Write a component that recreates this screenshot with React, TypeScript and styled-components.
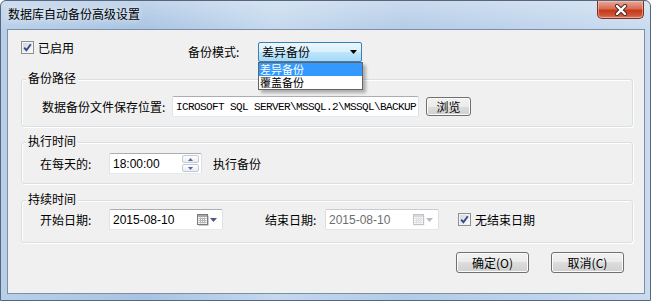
import styled, { createGlobalStyle } from "styled-components";

const GlobalStyle = createGlobalStyle`
  html, body {
    margin: 0;
    padding: 0;
    background: #ffffff;
  }
  body {
    font-family: "Noto Sans CJK SC", "Liberation Sans", sans-serif;
    font-size: 12px;
    color: #000;
  }
  * {
    box-sizing: border-box;
  }
`;

const Window = styled.div`
  width: 651px;
  height: 301px;
  border: 1px solid #56667c;
  border-radius: 6px 6px 0 0;
  display: flex;
  flex-direction: column;
  background:
    linear-gradient(180deg, rgba(255, 255, 255, 0.3), rgba(255, 255, 255, 0) 30px),
    linear-gradient(90deg, #b8cfe9 0%, #a8c3e2 22%, #c4d8ee 42%, #b3cbe7 62%, #bed3ec 82%, #c9dbef 100%);
`;

const TitleBar = styled.div`
  height: 28px;
  display: flex;
  justify-content: space-between;
  align-items: flex-start;
`;

const Title = styled.div`
  padding: 6px 0 0 7px;
  line-height: 14px;
  font-size: 12px;
  text-shadow: 0 0 6px rgba(255, 255, 255, 0.9);
`;

const CloseButton = styled.div`
  width: 47px;
  height: 18px;
  margin-right: 6px;
  border: 1px solid #7a3426;
  border-top: none;
  border-radius: 0 0 5px 5px;
  background: linear-gradient(180deg, #e9a999 0%, #d96c52 45%, #c5391a 55%, #cf5536 85%, #e08068 100%);
  box-shadow: inset 0 0 0 1px rgba(255, 220, 210, 0.45);
  display: flex;
  align-items: center;
  justify-content: center;
`;

const Client = styled.div`
  margin: 0 5px 0 6px;
  height: 265px;
  border: 1px solid #7d8fa6;
  background: #f0f0f0;
  padding: 0 11px 0 13px;
  display: flex;
  flex-direction: column;
`;

const TopRow = styled.div`
  margin-top: 11px;
  height: 21px;
  display: flex;
  align-items: flex-start;
`;

const CheckLabel = styled.div<{ $width?: number }>`
  display: flex;
  align-items: center;
  gap: 4px;
  height: 13px;
  line-height: 13px;
  width: ${(p) => (p.$width ? `${p.$width}px` : "auto")};
  flex: none;
`;

const CheckBox = styled.span`
  width: 13px;
  height: 13px;
  flex: none;
  border: 1px solid #8e8f8f;
  background: linear-gradient(135deg, #cdd2d8 0%, #eceef0 60%, #ffffff 100%);
  box-shadow: inset 0 0 0 1px #f4f4f4;
  display: flex;
  align-items: center;
  justify-content: center;
`;

const ModeGroup = styled.div`
  display: flex;
  align-items: center;
  margin-top: 1px;
`;

const FieldLabel = styled.span<{ $width: number }>`
  width: ${(p) => p.$width}px;
  flex: none;
  line-height: 14px;
  white-space: nowrap;
`;

const ComboWrap = styled.div`
  position: relative;
`;

const Combo = styled.div`
  width: 104px;
  height: 20px;
  border: 1px solid #3c7fb1;
  border-radius: 2px;
  background: linear-gradient(180deg, #eaf6fd 0%, #d9f0fc 50%, #bee6fd 50%, #a7d9f5 100%);
  display: flex;
  align-items: center;
  justify-content: space-between;
  padding: 0 4px 0 3px;
  line-height: 14px;
`;

const DropList = styled.div`
  position: absolute;
  top: 20px;
  left: 0;
  width: 105px;
  border: 1px solid #646464;
  background: #fff;
  box-shadow: 3px 3px 3px rgba(0, 0, 0, 0.28);
  z-index: 2;
`;

const DropItem = styled.div<{ $active?: boolean }>`
  height: 13px;
  line-height: 13px;
  font-size: 11px;
  padding-left: 1px;
  background: ${(p) => (p.$active ? "#3399ff" : "transparent")};
  color: ${(p) => (p.$active ? "#ffffff" : "#000000")};
`;

const Group = styled.div<{ $top: number; $padTop: number; $padBottom: number; $padLeft: number }>`
  position: relative;
  margin-top: ${(p) => p.$top}px;
  padding: ${(p) => `${p.$padTop}px 0 ${p.$padBottom}px ${p.$padLeft}px`};
  border: 1px solid #d5dfe5;
  border-radius: 3px;
  box-shadow: inset 1px 1px 0 #ffffff, 1px 1px 0 #ffffff;
`;

const Caption = styled.span`
  position: absolute;
  top: -9px;
  left: 4px;
  padding: 0 2px;
  line-height: 14px;
  background: #f0f0f0;
`;

const Row = styled.div`
  display: flex;
  align-items: center;
  height: 21px;
`;

const TextBox = styled.div<{ $width: number; $disabled?: boolean }>`
  width: ${(p) => p.$width}px;
  height: 21px;
  flex: none;
  border: 1px solid;
  border-color: ${(p) =>
    p.$disabled ? "#c9cbcf #dcdee2 #e4e6ea #dcdee2" : "#abadb3 #dbdfe6 #e3e9ef #e2e3ea"};
  border-radius: 2px;
  background: #fff;
  display: flex;
  align-items: center;
  padding-left: 3px;
  overflow: hidden;
  color: ${(p) => (p.$disabled ? "#6d6d6d" : "#000")};
`;

const PathText = styled.span`
  font-family: "Liberation Mono", "DejaVu Sans Mono", monospace;
  font-size: 11px;
  letter-spacing: -0.6px;
  white-space: nowrap;
  flex: 1;
`;

const NumText = styled.span`
  font-family: "Liberation Sans", Arial, sans-serif;
  font-size: 12px;
  flex: 1;
  white-space: nowrap;
`;

const Spinner = styled.div`
  width: 17px;
  height: 17px;
  margin-right: 2px;
  display: flex;
  flex-direction: column;
  gap: 1px;
`;

const SpinPart = styled.div`
  flex: 1;
  border: 1px solid #c3cad3;
  border-radius: 2px;
  background: linear-gradient(180deg, #ffffff 0%, #e9ecf0 100%);
  display: flex;
  align-items: center;
  justify-content: center;
`;

const PickerIcons = styled.div`
  display: flex;
  align-items: center;
  gap: 1px;
  margin-right: 5px;
`;

const Button = styled.div<{ $width: number; $height: number }>`
  width: ${(p) => p.$width}px;
  height: ${(p) => p.$height}px;
  flex: none;
  border: 1px solid #707070;
  border-radius: 3px;
  background: linear-gradient(180deg, #f2f2f2 0%, #ebebeb 50%, #dddddd 50%, #cfcfcf 100%);
  box-shadow: inset 0 0 0 1px #fbfbfb;
  display: flex;
  align-items: center;
  justify-content: center;
  line-height: 14px;
`;

const Plain = styled.span<{ $left?: number }>`
  margin-left: ${(p) => p.$left ?? 0}px;
  line-height: 14px;
  white-space: nowrap;
`;

const ButtonRow = styled.div`
  margin-top: 9px;
  padding-right: 9px;
  display: flex;
  justify-content: flex-end;
  gap: 22px;
`;

function CheckMark() {
  return (
    <svg width="9" height="9" viewBox="0 0 9 9">
      <path d="M1.2 4.6 L3.4 7.2 L7.8 1.2" fill="none" stroke="#34488a" strokeWidth="1.9" />
    </svg>
  );
}

function DownArrow({ color }: { color: string }) {
  return (
    <svg width="7" height="4" viewBox="0 0 7 4">
      <polygon points="0,0 7,0 3.5,4" fill={color} />
    </svg>
  );
}

function SmallTri({ up }: { up?: boolean }) {
  return (
    <svg width="5" height="3" viewBox="0 0 5 3">
      <polygon points={up ? "0,3 5,3 2.5,0" : "0,0 5,0 2.5,3"} fill="#4f67a6" />
    </svg>
  );
}

function CalendarIcon({ disabled }: { disabled?: boolean }) {
  const edge = disabled ? "#c4c4c4" : "#7b7b7b";
  const grid = disabled ? "#e0e0e0" : "#b5b5b5";
  return (
    <svg width="12" height="12" viewBox="0 0 12 12">
      <rect x="1.5" y="1.5" width="10" height="10" fill={disabled ? "#e8e8e8" : "#9a9a9a"} />
      <rect x="0.5" y="0.5" width="10" height="10" fill="#f7f7f7" stroke={edge} />
      <rect x="1" y="1" width="9" height="2" fill={disabled ? "#d8d8d8" : "#a9a9a9"} />
      {[4, 6, 8].map((y) => (
        <line key={`h${y}`} x1="1.5" y1={y + 0.5} x2="9.5" y2={y + 0.5} stroke={grid} />
      ))}
      {[3, 5, 7].map((x) => (
        <line key={`v${x}`} x1={x + 0.5} y1="3.5" x2={x + 0.5} y2="9.5" stroke={grid} />
      ))}
    </svg>
  );
}

function DateBox({ value, disabled }: { value: string; disabled?: boolean }) {
  return (
    <TextBox $width={114} $disabled={disabled}>
      <NumText>{value}</NumText>
      <PickerIcons>
        <CalendarIcon disabled={disabled} />
        <DownArrow color={disabled ? "#b7bcc6" : "#4a5a80"} />
      </PickerIcons>
    </TextBox>
  );
}

export default function App() {
  return (
    <>
      <GlobalStyle />
      <Window>
        <TitleBar>
          <Title>数据库自动备份高级设置</Title>
          <CloseButton>
            <svg width="14" height="12" viewBox="0 0 14 12">
              <path d="M3 2 L11 10 M11 2 L3 10" stroke="#4a2a24" strokeWidth="4.2" strokeLinecap="round" />
              <path d="M3 2 L11 10 M11 2 L3 10" stroke="#ffffff" strokeWidth="2.4" strokeLinecap="round" />
            </svg>
          </CloseButton>
        </TitleBar>

        <Client>
          <TopRow>
            <CheckLabel $width={167}>
              <CheckBox>
                <CheckMark />
              </CheckBox>
              <span>已启用</span>
            </CheckLabel>
            <ModeGroup>
              <FieldLabel $width={70}>备份模式:</FieldLabel>
              <ComboWrap>
                <Combo>
                  <span>差异备份</span>
                  <DownArrow color="#000000" />
                </Combo>
                <DropList>
                  <DropItem $active>差异备份</DropItem>
                  <DropItem>覆盖备份</DropItem>
                </DropList>
              </ComboWrap>
            </ModeGroup>
          </TopRow>

          <Group $top={17} $padTop={16} $padBottom={9} $padLeft={20}>
            <Caption>备份路径</Caption>
            <Row>
              <FieldLabel $width={130}>数据备份文件保存位置:</FieldLabel>
              <TextBox $width={247}>
                <PathText>ICROSOFT SQL SERVER\MSSQL.2\MSSQL\BACKUP</PathText>
              </TextBox>
              <Button $width={45} $height={19} style={{ marginLeft: 7 }}>
                浏览
              </Button>
            </Row>
          </Group>

          <Group $top={15} $padTop={10} $padBottom={9} $padLeft={18}>
            <Caption>执行时间</Caption>
            <Row>
              <FieldLabel $width={69}>在每天的:</FieldLabel>
              <TextBox $width={93}>
                <NumText>18:00:00</NumText>
                <Spinner>
                  <SpinPart>
                    <SmallTri up />
                  </SpinPart>
                  <SpinPart>
                    <SmallTri />
                  </SpinPart>
                </Spinner>
              </TextBox>
              <Plain $left={11}>执行备份</Plain>
            </Row>
          </Group>

          <Group $top={16} $padTop={8} $padBottom={12} $padLeft={18}>
            <Caption>持续时间</Caption>
            <Row>
              <FieldLabel $width={69}>开始日期:</FieldLabel>
              <DateBox value="2015-08-10" />
              <FieldLabel $width={60} style={{ marginLeft: 42 }}>
                结束日期:
              </FieldLabel>
              <DateBox value="2015-08-10" disabled />
              <CheckLabel style={{ marginLeft: 19 }}>
                <CheckBox>
                  <CheckMark />
                </CheckBox>
                <span>无结束日期</span>
              </CheckLabel>
            </Row>
          </Group>

          <ButtonRow>
            <Button $width={73} $height={21}>
              确定(O)
            </Button>
            <Button $width={73} $height={21}>
              取消(C)
            </Button>
          </ButtonRow>
        </Client>
      </Window>
    </>
  );
}
